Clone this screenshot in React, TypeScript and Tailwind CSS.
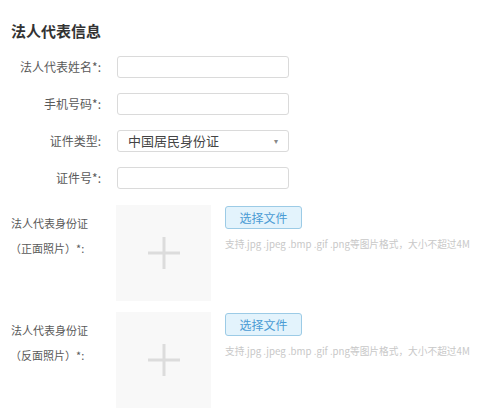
import React from "react";

const font = { fontFamily: '"Microsoft YaHei", "Noto Sans CJK SC", sans-serif' };

function TextRow({ label, top }: { label: string; top: string }) {
    return (
        <div className={`flex items-center ${top}`}>
            <div className="w-[103px] pr-[2px] text-right text-[12px] text-[#5a5a5a]">{label}</div>
            <input className="ml-[14px] h-[22px] w-[172px] rounded-[3px] border border-[#dadada] bg-white outline-none" />
        </div>
    );
}

function UploadRow({ side, top }: { side: string; top: string }) {
    return (
        <div className={`flex ${top}`}>
            <div className="w-[103px] pl-[11px] pt-[6px] text-[11px] leading-[25px] text-[#5a5a5a]">
                <div>法人代表身份证</div>
                <div className="-ml-[1px]">（{side}照片）*:</div>
            </div>
            <div className="ml-[13px] flex h-[96px] w-[95px] items-center justify-center bg-[#f8f8f8]">
                <svg width="32" height="32" viewBox="0 0 32 32">
                    <rect x="14.5" y="0" width="3" height="32" fill="#dcdcdc" />
                    <rect x="0" y="14.5" width="32" height="3" fill="#dcdcdc" />
                </svg>
            </div>
            <div className="ml-[14px] flex flex-col">
                <button className="mt-[1px] h-[23px] w-[77px] rounded-[3px] border border-[#9ccbe6] bg-[#e3f3fc] text-[12px] text-[#4a9bd4]">
                    选择文件
                </button>
                <div className="mt-[8px] whitespace-nowrap text-[9.7px] text-[#c8c8c8]">
                    支持.jpg .jpeg .bmp .gif .png等图片格式，大小不超过4M
                </div>
            </div>
        </div>
    );
}

export default function App() {
    return (
        <div className="h-[415px] w-[480px] overflow-hidden bg-white" style={font}>
            <h1 className="pl-[11px] pt-[21px] text-[15px] font-bold leading-[20px] text-[#333]">法人代表信息</h1>
            <TextRow label="法人代表姓名*:" top="mt-[15px]" />
            <TextRow label="手机号码*:" top="mt-[15px]" />
            <div className="mt-[15px] flex items-center">
                <div className="w-[103px] pr-[2px] text-right text-[12px] text-[#5a5a5a]">证件类型:</div>
                <div className="ml-[14px] flex h-[22px] w-[172px] items-center justify-between rounded-[3px] border border-[#dadada] bg-white pl-[10px] pr-[10px]">
                    <span className="text-[13px] text-[#444]">中国居民身份证</span>
                    <span className="text-[8px] text-[#888]">▾</span>
                </div>
            </div>
            <TextRow label="证件号*:" top="mt-[15px]" />
            <UploadRow side="正面" top="mt-[16px]" />
            <UploadRow side="反面" top="mt-[11px]" />
        </div>
    );
}
